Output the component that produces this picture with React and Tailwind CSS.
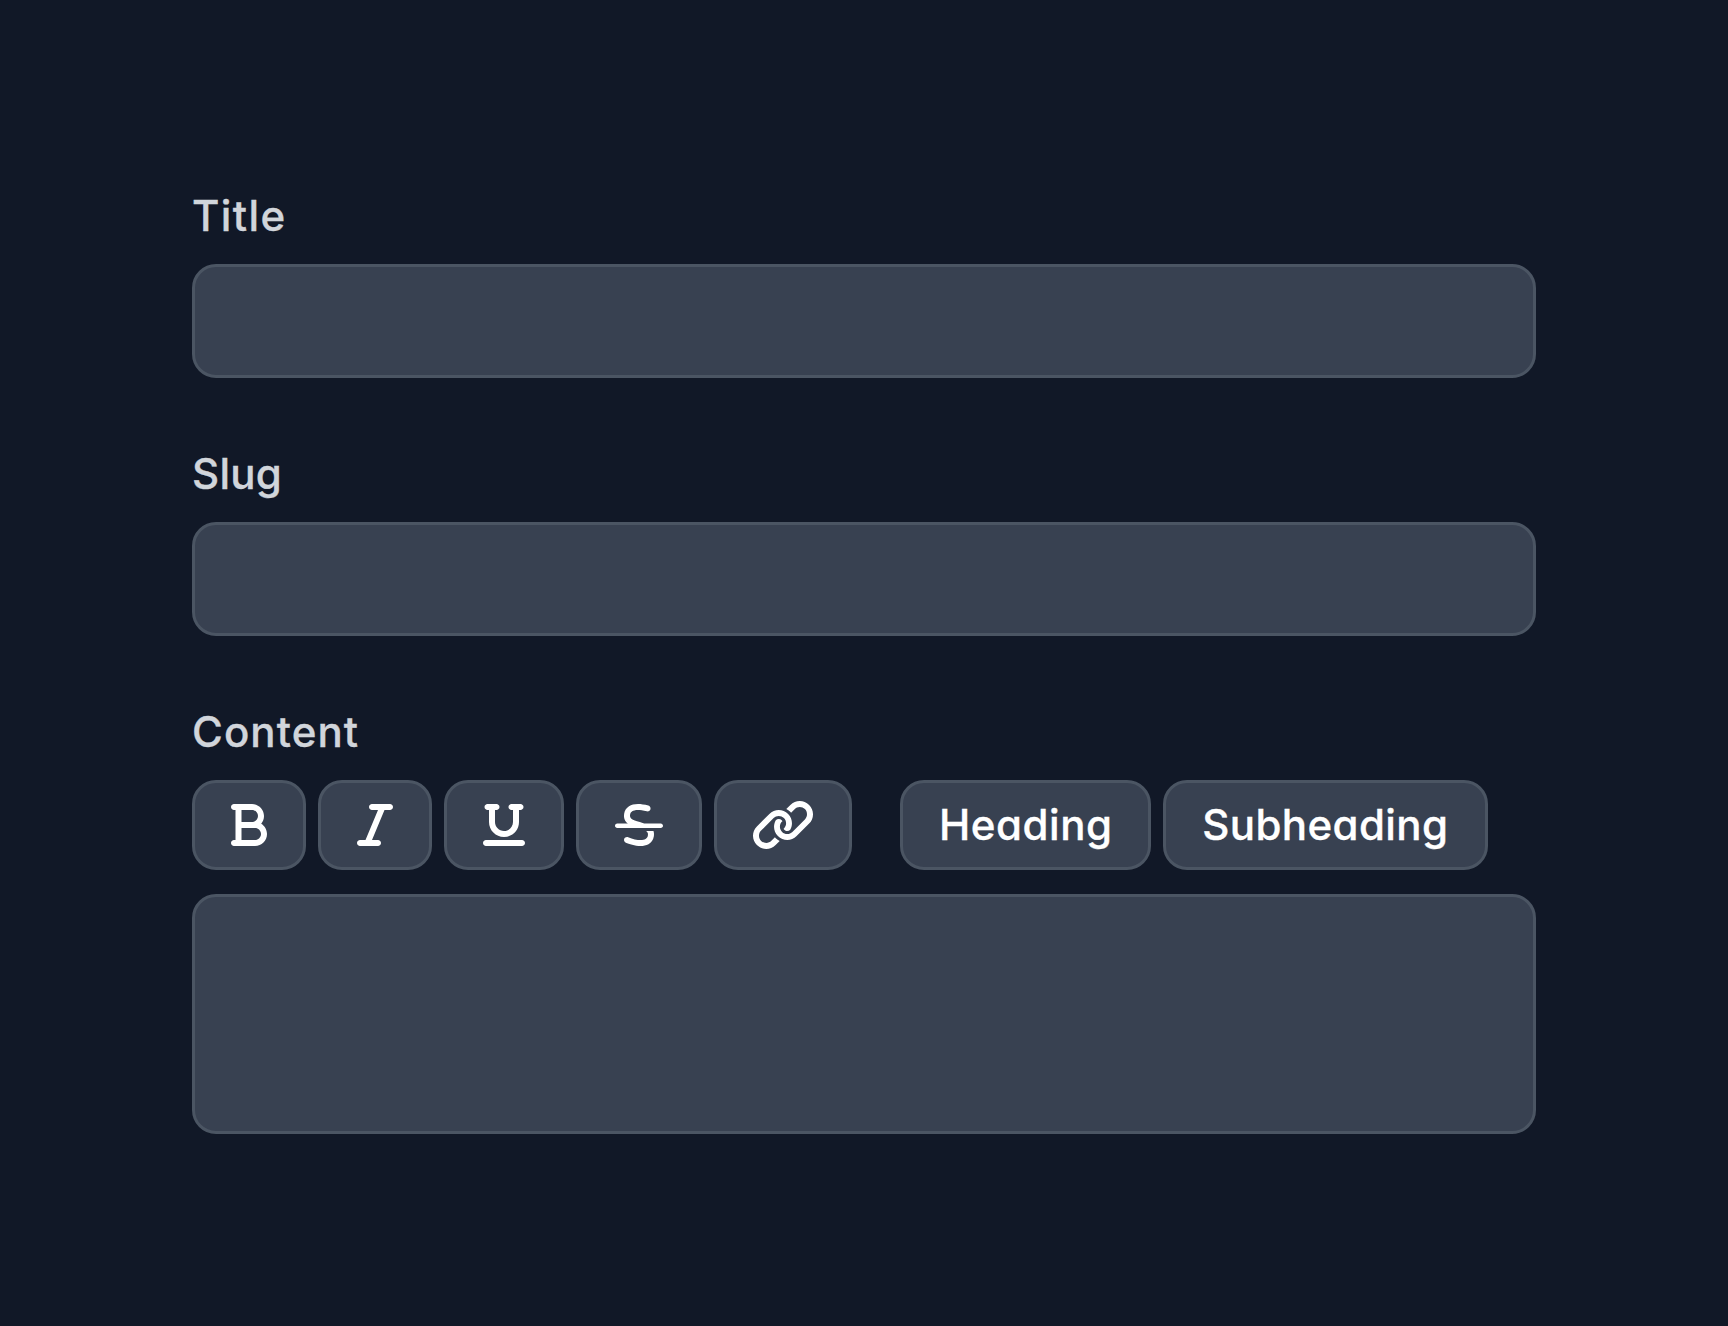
import { FaBold, FaItalic, FaUnderline } from "react-icons/fa6";

const box = "rounded-[24px] border-[3px] border-[#4b5563] bg-[#384151]";

const linkHalf =
  "M598.6 41.41C570.1 13.8 534.8 0 498.6 0s-72.36 13.8-99.96 41.41l-43.36 43.36c15.11 8.012 29.47 17.58 41.91 30.02c3.146 3.146 5.898 6.518 8.742 9.838l37.96-37.96C458.5 72.05 477.1 64 498.6 64c20.67 0 40.1 8.047 54.71 22.66c14.61 14.61 22.66 34.04 22.66 54.71s-8.049 40.1-22.66 54.71l-133.3 133.3C405.5 343.1 386 352 365.4 352s-40.1-8.048-54.71-22.66C296 314.7 287.1 295.3 287.1 274.6s8.047-40.1 22.66-54.71L314.2 216.4C312.5 212.1 309.9 208.5 306.7 205.3C298.1 196.7 286.8 192 274.6 192c-11.93 0-23.1 4.664-31.61 12.97c-30.71 53.96-23.63 123.6 22.39 169.6C293 402.2 329.2 416 365.4 416c36.18 0 72.36-13.8 99.96-41.41L598.6 241.3c28.45-28.45 42.24-66.01 41.37-103.3C639.1 102.1 625.4 68.16 598.6 41.41z";

// The chain is one open loop and the same loop turned half way round.
function LinkIcon() {
  return (
    <svg viewBox="0 0 640 512" fill="currentColor" className="h-12 w-[60px]">
      <path d={linkHalf} />
      <path d={linkHalf} transform="rotate(180 320 256)" />
    </svg>
  );
}

function StrikethroughIcon() {
  return (
    <svg viewBox="0 0 512 512" fill="currentColor" className="size-12">
      <path d="M332.2 319.9c17.22 12.17 22.33 26.51 18.61 48.21c-3.031 17.59-10.88 29.34-24.72 36.99c-35.44 19.75-108.5 11.96-186-19.68c-16.34-6.686-35.03 1.156-41.72 17.53s1.188 35.05 17.53 41.71c31.75 12.93 95.69 35.37 157.6 35.37c29.62 0 58.81-5.156 83.72-18.96c30.81-17.09 50.44-45.46 56.72-82.11c3.998-23.27 2.168-42.58-3.488-59.05H332.2z" />
      <path d="M488 239.9l-176.5-.0309c-15.85-5.613-31.83-10.34-46.7-14.62c-85.47-24.62-110.9-39.05-103.7-81.33c2.5-14.53 10.16-25.96 22.72-34.03c20.47-13.15 64.06-23.84 155.4.3438c17.09 4.531 34.59-5.654 39.13-22.74c4.531-17.09-5.656-34.59-22.75-39.12c-91.31-24.18-160.7-21.62-206.3 7.654C121.8 73.72 103.6 101.1 98.09 133.1C89.26 184.5 107.9 217.3 137.2 239.9L24 239.9c-13.25 0-24 10.75-24 24c0 13.25 10.75 24 24 24h464c13.25 0 24-10.75 24-24C512 250.7 501.3 239.9 488 239.9z" />
    </svg>
  );
}

function Label({ htmlFor, className, children }) {
  return (
    <label htmlFor={htmlFor} className={`mb-6 block h-12 text-[42px] leading-[48px] text-[#d1d5db] ${className}`}>
      {children}
    </label>
  );
}

function ToolButton({ label, className, children }) {
  return (
    <button
      type="button"
      aria-label={label}
      className={`flex h-[90px] shrink-0 items-center justify-center text-[42px] leading-[48px] text-white ${box} ${className}`}
    >
      {children}
    </button>
  );
}

export default function App() {
  return (
    <main className="min-h-[1326px] bg-[#111827] px-48 pt-48 font-['Inter',sans-serif] font-medium [-webkit-text-stroke:0.35px] [font-feature-settings:'cv11']">
      <form className="flex flex-col gap-[72px]">
        <div>
          <Label htmlFor="title" className="tracking-[0.033em]">Title</Label>
          <input id="title" className={`block h-[114px] w-full px-9 text-[42px] text-white ${box}`} />
        </div>
        <div>
          <Label htmlFor="slug" className="tracking-[0.007em]">Slug</Label>
          <input id="slug" className={`block h-[114px] w-full px-9 text-[42px] text-white ${box}`} />
        </div>
        <div>
          <Label htmlFor="content" className="tracking-[0.026em]">Content</Label>
          <div className="mb-6 flex gap-12">
            <div className="flex gap-3">
              <ToolButton label="Bold" className="w-[114px]"><FaBold className="h-12 w-9" /></ToolButton>
              <ToolButton label="Italic" className="w-[114px]"><FaItalic className="h-12 w-9" /></ToolButton>
              <ToolButton label="Underline" className="w-[120px]"><FaUnderline className="h-12 w-[42px]" /></ToolButton>
              <ToolButton label="Strikethrough" className="w-[126px]"><StrikethroughIcon /></ToolButton>
              <ToolButton label="Link" className="w-[138px]"><LinkIcon /></ToolButton>
            </div>
            <div className="flex gap-3">
              <ToolButton label="Heading" className="w-[250.6px] pl-px tracking-[0.013em]">Heading</ToolButton>
              <ToolButton label="Subheading" className="w-[325.4px] tracking-[0.01em]">Subheading</ToolButton>
            </div>
          </div>
          <textarea id="content" className={`block h-[240px] w-full resize-none px-9 py-6 text-[42px] text-white ${box}`} />
        </div>
      </form>
    </main>
  );
}
